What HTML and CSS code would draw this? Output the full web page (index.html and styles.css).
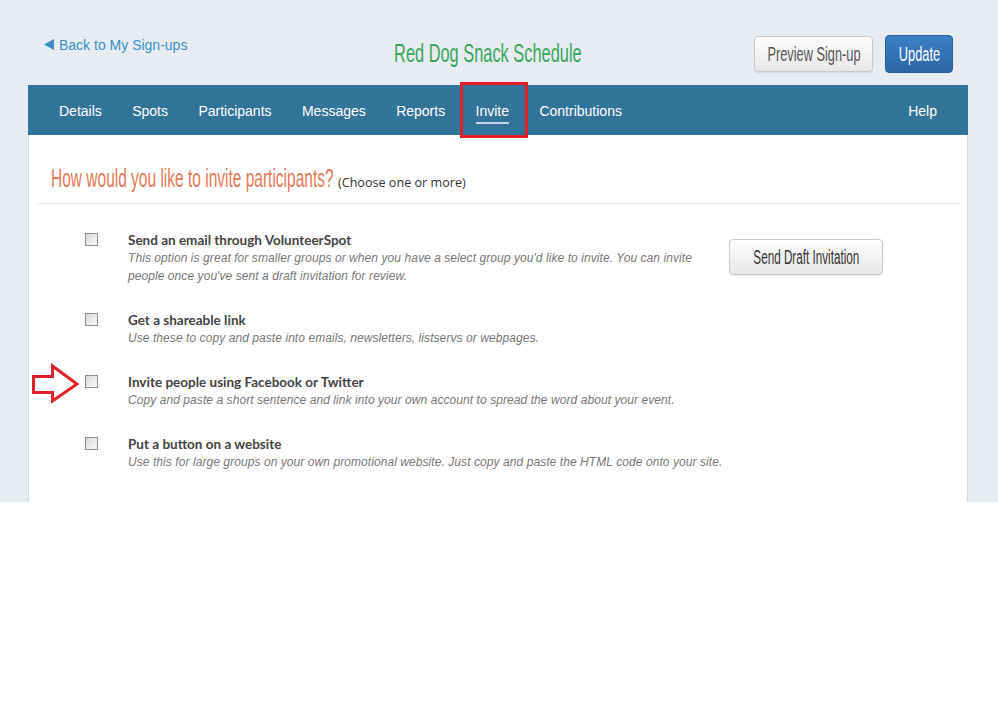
FILE: index.html
```html
<!DOCTYPE html>
<html>
<head>
<meta charset="utf-8">
<link rel="stylesheet" href="styles.css">
</head>
<body>
<div class="page">
  <div class="wrap">
    <header class="topbar">
      <a class="back" href="#"><svg class="back-tri" width="10" height="11" viewBox="0 0 10 11"><polygon points="10,0 10,11 0,5.5" fill="#3d8fc6"/></svg>Back to My Sign-ups</a>
      <h1 class="title"><span class="cond cond-title">Red Dog Snack Schedule</span></h1>
      <div class="actions">
        <a class="btn btn-light" href="#"><span class="cond cond-btn">Preview Sign-up</span></a>
        <a class="btn btn-primary" href="#"><span class="cond cond-btn">Update</span></a>
      </div>
    </header>
    <nav class="nav">
      <a href="#">Details</a>
      <a href="#">Spots</a>
      <a href="#">Participants</a>
      <a href="#">Messages</a>
      <a href="#">Reports</a>
      <a class="active" href="#"><span>Invite</span><i class="mark"></i></a>
      <a href="#">Contributions</a>
      <a class="help" href="#">Help</a>
    </nav>
    <main class="card">
      <div class="card-head">
        <h2 class="question"><span class="cond cond-q">How would you like to invite participants?</span></h2>
        <span class="hint">(Choose one or more)</span>
      </div>
      <div class="options">
        <div class="option">
          <input class="check" type="checkbox">
          <div class="text narrow">
            <div class="opt-title">Send an email through VolunteerSpot</div>
            <div class="opt-desc">This option is great for smaller groups or when you have a select group you'd like to invite. You can invite people once you've sent a draft invitation for review.</div>
          </div>
          <a class="btn btn-light btn-draft" href="#"><span class="cond cond-draft">Send Draft Invitation</span></a>
        </div>
        <div class="option">
          <input class="check" type="checkbox">
          <div class="text">
            <div class="opt-title">Get a shareable link</div>
            <div class="opt-desc">Use these to copy and paste into emails, newsletters, listservs or webpages.</div>
          </div>
        </div>
        <div class="option">
          <svg class="arrow" width="50" height="40" viewBox="0 0 50 40"><polygon points="2.5,13.5 21.5,13.5 21.5,3 46,21 21.5,38 21.5,29.5 2.5,29.5" fill="none" stroke="#e2202a" stroke-width="3"/></svg>
          <input class="check" type="checkbox">
          <div class="text">
            <div class="opt-title">Invite people using Facebook or Twitter</div>
            <div class="opt-desc">Copy and paste a short sentence and link into your own account to spread the word about your event.</div>
          </div>
        </div>
        <div class="option">
          <input class="check" type="checkbox">
          <div class="text">
            <div class="opt-title">Put a button on a website</div>
            <div class="opt-desc">Use this for large groups on your own promotional website. Just copy and paste the HTML code onto your site.</div>
          </div>
        </div>
      </div>
    </main>
  </div>
</div>
</body>
</html>
```
FILE: styles.css
```css
* { box-sizing: border-box; }
html, body { margin: 0; padding: 0; background: #fff; }
body { font-family: "Liberation Sans", Arial, sans-serif; }
a { text-decoration: none; }

/* condensed display face (stand-in for a narrow webfont) */
.cond {
  display: inline-block;
  white-space: nowrap;
  font-family: "Liberation Sans", Arial, sans-serif;
  transform-origin: center center;
}
.cond-title { transform: scaleX(0.63); }
.cond-btn { transform: scaleX(0.655); }
.cond-draft { transform: scaleX(0.6); }
.cond-q { transform: scaleX(0.62); transform-origin: left center; }

.page {
  background: #e6ecf2;
  height: 502px;
  overflow: hidden;
}
.wrap {
  width: 940px;
  margin-left: 28px;
  height: 100%;
  display: flex;
  flex-direction: column;
}

/* header */
.topbar {
  height: 85px;
  display: flex;
  align-items: flex-start;
}
.back {
  margin-left: 16px;
  margin-top: 37px;
  font-size: 14px;
  line-height: 16px;
  color: #3d8fc6;
  display: flex;
  align-items: center;
}
.back-tri { margin-right: 5px; margin-top: -1px; }
.title {
  flex: 1;
  margin: 38px 0 0;
  padding-left: 34px;
  text-align: center;
  font-weight: normal;
  font-size: 26px;
  line-height: 30px;
  color: #3ca55a;
}
.actions {
  display: flex;
  gap: 12px;
  margin-top: 36px;
  margin-right: 15px;
}
.btn {
  display: inline-flex;
  align-items: center;
  justify-content: center;
  height: 36px;
  border-radius: 4px;
  font-size: 19.5px;
  overflow: hidden;
}
.btn-light {
  width: 119px;
  color: #555;
  background: linear-gradient(#fdfdfd, #e8e8e8);
  border: 1px solid #c9c9c9;
  box-shadow: 0 1px 1px rgba(0,0,0,0.08);
}
.btn-primary {
  width: 68px;
  height: 38px;
  margin-top: -1px;
  color: #fff;
  background: linear-gradient(#3b80c4, #2b67a8);
  border: 1px solid #285f98;
}

/* nav */
.nav {
  height: 50px;
  background: #31749a;
  display: flex;
  align-items: center;
  gap: 30.4px;
  padding: 0 31px;
}
.nav a {
  color: #fff;
  font-size: 14px;
  line-height: 50px;
  padding-top: 2px;
  position: relative;
}
.nav a.active span {
  padding-bottom: 3px;
  border-bottom: 2px solid #c2d5e6;
}
.nav .mark {
  position: absolute;
  left: -16px;
  right: -19px;
  top: -2px;
  bottom: -2px;
  border: 3px solid #e31e26;
}
.nav .help { margin-left: auto; }

/* card */
.card {
  flex: 1;
  background: #fff;
  border-left: 1px solid #d2dae2;
  border-right: 1px solid #d2dae2;
  padding: 0 8px;
}
.card-head {
  display: flex;
  align-items: baseline;
  gap: 5px;
  padding: 29px 0 11px 14px;
  border-bottom: 1px solid #e4e9ee;
}
.question {
  margin: 0;
  width: 282px;
  white-space: nowrap;
  font-weight: normal;
  font-size: 25px;
  line-height: 28px;
  color: #e8795b;
}
.hint {
  font-family: "Open Sans", sans-serif;
  font-size: 12.6px;
  color: #333;
}

.options {
  padding: 28px 0 0 48px;
}
.option {
  display: flex;
  align-items: flex-start;
  margin-bottom: 27px;
  position: relative;
}
.check {
  -webkit-appearance: none;
  appearance: none;
  width: 13px;
  height: 13px;
  margin: 1px 30px 0 0;
  border: 1px solid #8e8e8e;
  border-radius: 0;
  background: linear-gradient(135deg, #d8d8d8, #fbfbfb);
  flex: none;
}
.text { flex: none; }
.text.narrow { width: 580px; }
.opt-title {
  font-family: Lato, "Open Sans", sans-serif;
  font-weight: bold;
  font-size: 13.5px;
  line-height: 17px;
  color: #444;
}
.opt-desc {
  font-style: italic;
  font-size: 12px;
  line-height: 18px;
  letter-spacing: 0.07px;
  color: #777;
}
.btn-draft {
  width: 154px;
  height: 36px;
  margin: 7px 0 0 21px;
  color: #333;
}
.arrow {
  position: absolute;
  left: -54px;
  top: -11px;
}
```
